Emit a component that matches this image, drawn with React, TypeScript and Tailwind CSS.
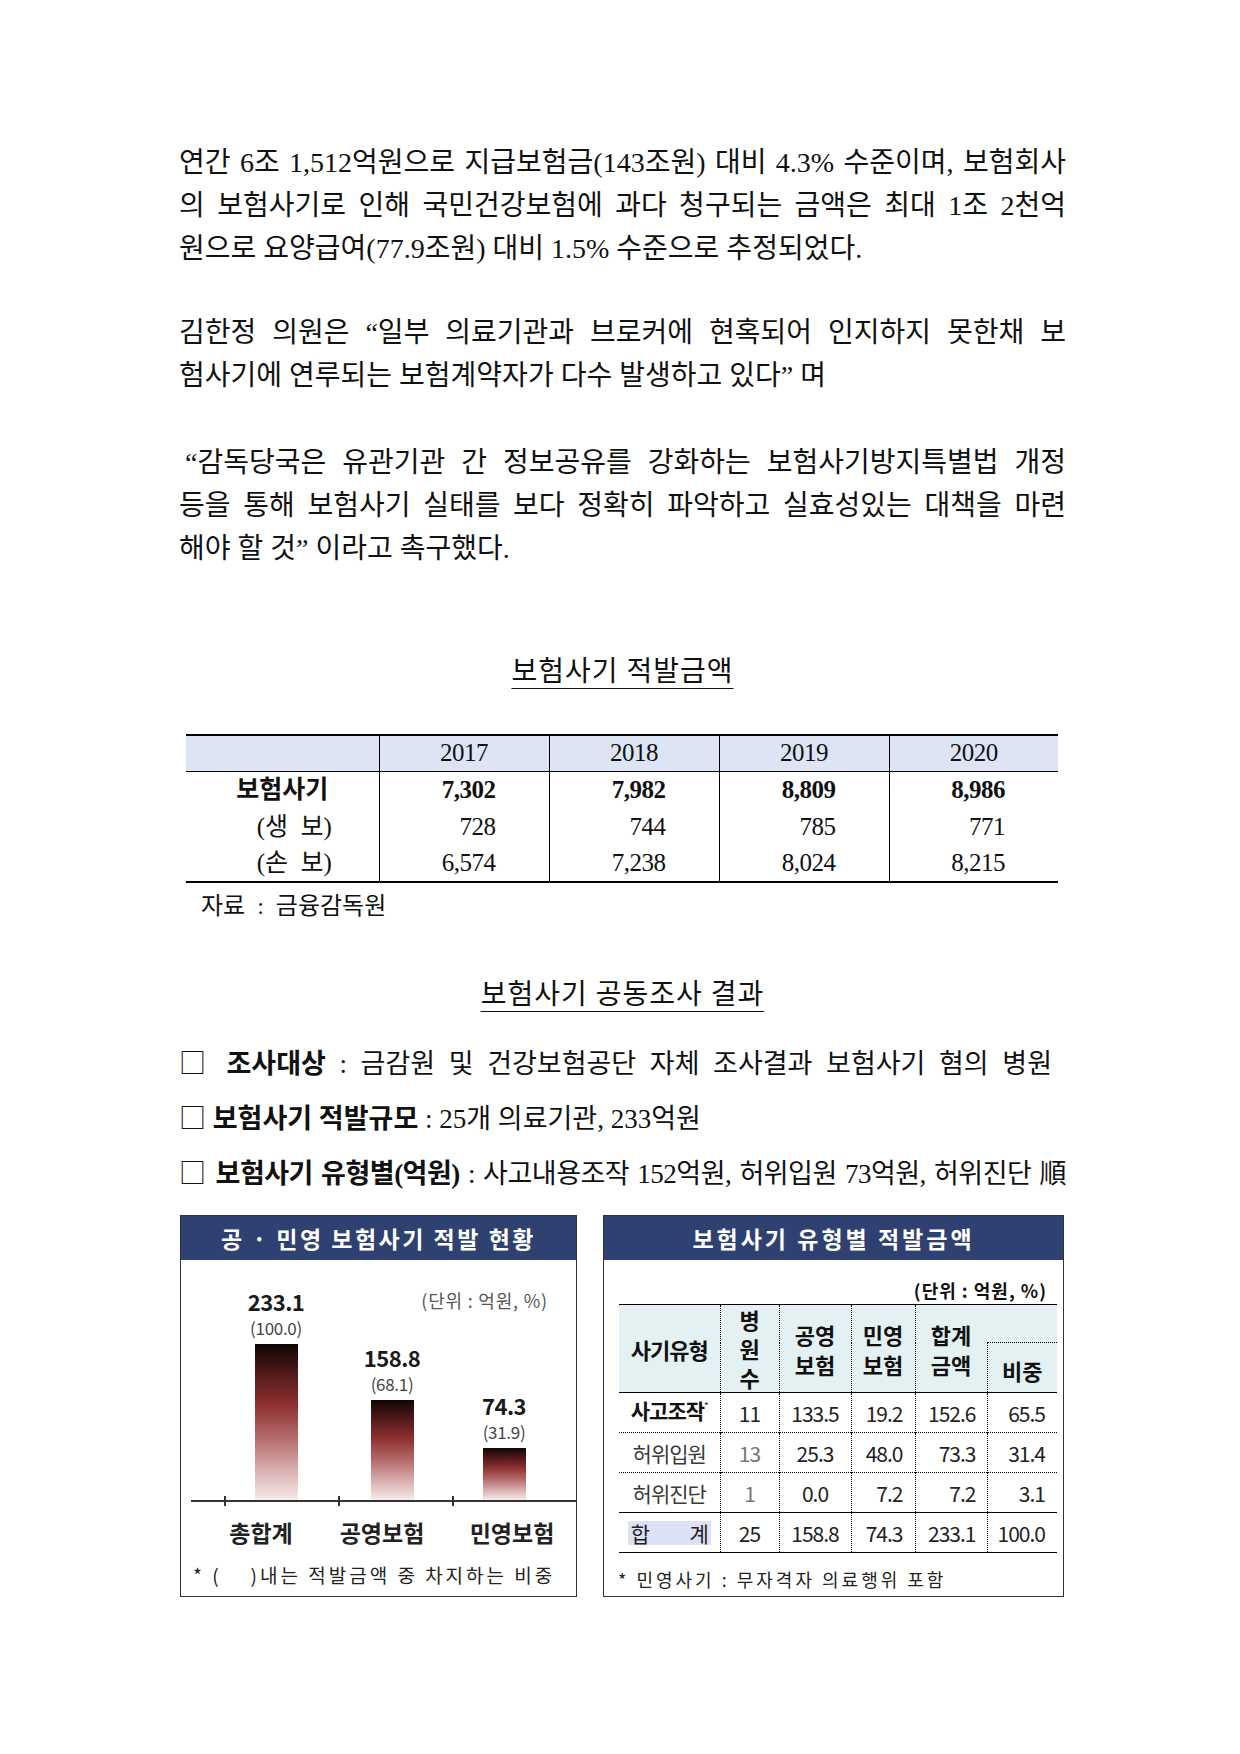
import type { ReactNode } from "react";

const serif = "font-['Liberation_Serif','Noto_Sans_CJK_KR',serif]";
const sans = "font-['Noto_Sans_CJK_KR','Noto_Sans',sans-serif]";

function Line({ children, last = false, className = "" }: { children: ReactNode; last?: boolean; className?: string }) {
  return (
    <div className={`whitespace-nowrap ${last ? "" : "text-justify [text-align-last:justify]"} ${className}`}>
      {children}
    </div>
  );
}

function Box() {
  return <span className={`${sans} font-normal`}>□</span>;
}

function Bar({ value, pct, height, className = "" }: { value: string; pct: string; height: number; className?: string }) {
  return (
    <div className={`w-[110px] flex flex-col items-center ${className}`}>
      <div className="text-[22px] leading-[24px] font-bold tracking-[-0.5px] text-[#1a1a1a]">{value}</div>
      <div className="mt-[5px] text-[17px] leading-[20px] text-[#444] tracking-[-0.3px]">{pct}</div>
      <div
        className="mt-[6px] w-[43px] bg-[linear-gradient(to_bottom,#100505_0%,#4e1818_18%,#8c2f2f_38%,#b46a6a_60%,#dab3b3_82%,#f7eaea_100%)]"
        style={{ height }}
      />
    </div>
  );
}

const rows = [
  { label: "사고조작", bold: true, n: "11", nGray: false, a: "133.5", b: "19.2", c: "152.6", d: "65.5" },
  { label: "허위입원", bold: false, n: "13", nGray: true, a: "25.3", b: "48.0", c: "73.3", d: "31.4" },
  { label: "허위진단", bold: false, n: "1", nGray: true, a: "0.0", b: "7.2", c: "7.2", d: "3.1" },
];

export default function App() {
  return (
    <div className={`w-[1240px] h-[1754px] bg-white text-[#111] ${serif}`}>
      <div className="pl-[179px] pr-[174px] pt-[141px] text-[28px] leading-[43px]">
        <Line>연간 6조 1,512억원으로 지급보험금(143조원) 대비 4.3% 수준이며, 보험회사</Line>
        <Line>의 보험사기로 인해 국민건강보험에 과다 청구되는 금액은 최대 1조 2천억</Line>
        <Line last>원으로 요양급여(77.9조원) 대비 1.5% 수준으로 추정되었다.</Line>

        <div className="mt-[41px]">
          <Line>김한정 의원은 “일부 의료기관과 브로커에 현혹되어 인지하지 못한채 보</Line>
          <Line last>험사기에 연루되는 보험계약자가 다수 발생하고 있다” 며</Line>
        </div>

        <div className="mt-[44px]">
          <Line className="pl-[6px]">“감독당국은 유관기관 간 정보공유를 강화하는 보험사기방지특별법 개정</Line>
          <Line>등을 통해 보험사기 실태를 보다 정확히 파악하고 실효성있는 대책을 마련</Line>
          <Line last>해야 할 것” 이라고 촉구했다.</Line>
        </div>

        <div className="mt-[85px] text-center leading-[34px]">
          <span className="underline underline-offset-[7px] decoration-1 tracking-[1px]">보험사기 적발금액</span>
        </div>

        <table className="mt-[45px] ml-[7px] w-[872px] table-fixed border-collapse text-[25px] leading-[30px] border-t-2 border-b-2 border-black">
          <colgroup>
            <col className="w-[193px]" />
            <col className="w-[170px]" />
            <col className="w-[170px]" />
            <col className="w-[170px]" />
            <col className="w-[169px]" />
          </colgroup>
          <thead>
            <tr className="h-[36px] bg-[#dde5f5] border-b border-black">
              <th className="font-normal"></th>
              {["2017", "2018", "2019", "2020"].map((y) => (
                <th key={y} className="font-normal border-l border-black tracking-[-0.5px]">{y}</th>
              ))}
            </tr>
          </thead>
          <tbody>
            <tr className="h-[37px]">
              <td className="text-center font-bold">보험사기</td>
              {["7,302", "7,982", "8,809", "8,986"].map((v) => (
                <td key={v} className="border-l border-black text-right pr-[53px] font-bold tracking-[-0.5px]">{v}</td>
              ))}
            </tr>
            <tr className="h-[37px]">
              <td className="text-center pl-[24px]">(생&nbsp;&nbsp;보)</td>
              {["728", "744", "785", "771"].map((v) => (
                <td key={v} className="border-l border-black text-right pr-[53px] tracking-[-0.5px]">{v}</td>
              ))}
            </tr>
            <tr className="h-[37px]">
              <td className="text-center pl-[24px]">(손&nbsp;&nbsp;보)</td>
              {["6,574", "7,238", "8,024", "8,215"].map((v) => (
                <td key={v} className="border-l border-black text-right pr-[53px] tracking-[-0.5px]">{v}</td>
              ))}
            </tr>
          </tbody>
        </table>

        <div className="mt-[8px] ml-[22px] text-[24px] leading-[30px]">자료&nbsp;&nbsp;:&nbsp;&nbsp;금융감독원</div>

        <div className="mt-[57px] text-center leading-[34px]">
          <span className="underline underline-offset-[7px] decoration-1 tracking-[1px]">보험사기 공동조사 결과</span>
        </div>

        <div className="text-[27px] leading-[40px]">
          <div className="mt-[30px] w-[873px] whitespace-nowrap text-justify [text-align-last:justify]">
            <Box /> <b>조사대상</b> : 금감원 및 건강보험공단 자체 조사결과 보험사기 혐의 병원
          </div>
          <div className="mt-[13px] whitespace-nowrap">
            <Box /> <b>보험사기 적발규모</b> : 25개 의료기관, 233억원
          </div>
          <div className="mt-[13px] whitespace-nowrap text-justify [text-align-last:justify] tracking-[-0.5px]">
            <Box /> <b>보험사기 유형별(억원)</b> : 사고내용조작 152억원, 허위입원 73억원, 허위진단 順
          </div>
        </div>

        <div className={`mt-[21px] flex ${sans}`}>
          {/* left: bar chart */}
          <div className="ml-[1px] w-[397px] h-[382px] border border-[#333] flex flex-col">
            <div className="h-[44px] bg-[#2f4170] text-white text-[23px] leading-[30px] font-bold tracking-[2.5px] flex items-center justify-center">
              공 · 민영 보험사기 적발 현황
            </div>
            <div className="relative h-[240px] flex items-end">
              <div className="absolute top-[29px] right-[28px] text-[18px] leading-[22px] tracking-[0.8px] text-[#555]">(단위 : 억원, %)</div>
              <Bar value="233.1" pct="(100.0)" height={156} className="ml-[40px]" />
              <Bar value="158.8" pct="(68.1)" height={100} className="ml-[6px]" />
              <Bar value="74.3" pct="(31.9)" height={52} className="ml-[2px]" />
            </div>
            <div className="relative ml-[10px] h-[2px] bg-[#333]">
              <div className="absolute left-[33px] top-[-4px] w-[2px] h-[10px] bg-[#333]" />
              <div className="absolute left-[147px] top-[-4px] w-[2px] h-[10px] bg-[#333]" />
              <div className="absolute left-[261px] top-[-4px] w-[2px] h-[10px] bg-[#333]" />
            </div>
            <div className="mt-[15px] flex text-[23px] leading-[30px] font-bold text-[#222]">
              <div className="ml-[25px] w-[110px] text-center">총합계</div>
              <div className="ml-[11px] w-[110px] text-center">공영보험</div>
              <div className="ml-[20px] w-[110px] text-center">민영보험</div>
            </div>
            <div className="mt-[15px] ml-[12px] text-[19px] leading-[26px] tracking-[3px] text-[#222] whitespace-nowrap">
              * (&nbsp;&nbsp;&nbsp;&nbsp;)내는 적발금액 중 차지하는 비중
            </div>
          </div>

          {/* right: table */}
          <div className="ml-[26px] w-[461px] h-[382px] border border-[#333] flex flex-col">
            <div className="h-[44px] bg-[#2f4170] text-white text-[23px] leading-[30px] font-bold tracking-[3px] flex items-center justify-center">
              보험사기 유형별 적발금액
            </div>
            <div className="mt-[19px] pr-[16px] text-right text-[18px] leading-[22px] tracking-[1px] font-bold text-[#111]">(단위 : 억원, %)</div>
            <table className="mt-[3px] ml-[15px] w-[438px] table-fixed border-collapse text-[21px] text-[#222] border-t border-b border-black">
              <colgroup>
                <col className="w-[101px]" />
                <col className="w-[59px]" />
                <col className="w-[72px]" />
                <col className="w-[64px]" />
                <col className="w-[72px]" />
                <col className="w-[70px]" />
              </colgroup>
              <thead className="bg-[#e4f1f3] font-bold text-[22px] text-[#111]">
                <tr className="h-[38px]">
                  <th rowSpan={2} className="tracking-[-1px] leading-[28px]">사기유형</th>
                  <th rowSpan={2} className="border-l border-dotted border-black leading-[29px]">병<br />원<br />수</th>
                  <th rowSpan={2} className="border-l border-dotted border-black leading-[30px]">공영<br />보험</th>
                  <th rowSpan={2} className="border-l border-dotted border-black leading-[30px]">민영<br />보험</th>
                  <th rowSpan={2} className="border-l border-dotted border-black leading-[30px]">합계<br />금액</th>
                  <th className="border-b border-dotted border-black"></th>
                </tr>
                <tr className="h-[50px]">
                  <th className="border-l border-dotted border-black leading-[30px] pt-[4px]">비중</th>
                </tr>
              </thead>
              <tbody className="border-t border-black leading-[28px] tracking-[-1px]">
                {rows.map((r, i) => (
                  <tr key={r.label} className={`h-[40px] ${i < 2 ? "border-b border-dotted border-black" : "border-b border-solid border-black"}`}>
                    <td className={`text-center ${r.bold ? "font-bold text-[#111]" : "text-[#3a3a3a]"}`}>
                      {r.label}
                      {r.bold && <span className="relative top-[-9px] text-[10px] font-normal">*</span>}
                    </td>
                    <td className={`text-center border-l border-dotted border-black ${r.nGray ? "text-[#777]" : ""}`}>{r.n}</td>
                    <td className="text-center border-l border-dotted border-black">{r.a}</td>
                    <td className="text-right pr-[12px] border-l border-dotted border-black">{r.b}</td>
                    <td className="text-right pr-[11px] border-l border-dotted border-black">{r.c}</td>
                    <td className="text-right pr-[12px] border-l border-dotted border-black">{r.d}</td>
                  </tr>
                ))}
                <tr className="h-[40px]">
                  <td className="text-center">
                    <span className="inline-flex w-[83px] justify-between px-[3px] bg-[#dde1f5] leading-[24px]">
                      <span>합</span>
                      <span>계</span>
                    </span>
                  </td>
                  <td className="text-center border-l border-dotted border-black">25</td>
                  <td className="text-center border-l border-dotted border-black">158.8</td>
                  <td className="text-right pr-[12px] border-l border-dotted border-black">74.3</td>
                  <td className="text-right pr-[11px] border-l border-dotted border-black">233.1</td>
                  <td className="text-right pr-[12px] border-l border-dotted border-black">100.0</td>
                </tr>
              </tbody>
            </table>
            <div className="mt-[14px] ml-[14px] text-[18px] leading-[24px] tracking-[3px] text-[#222] whitespace-nowrap">
              * 민영사기 : 무자격자 의료행위 포함
            </div>
          </div>
        </div>
      </div>
    </div>
  );
}
